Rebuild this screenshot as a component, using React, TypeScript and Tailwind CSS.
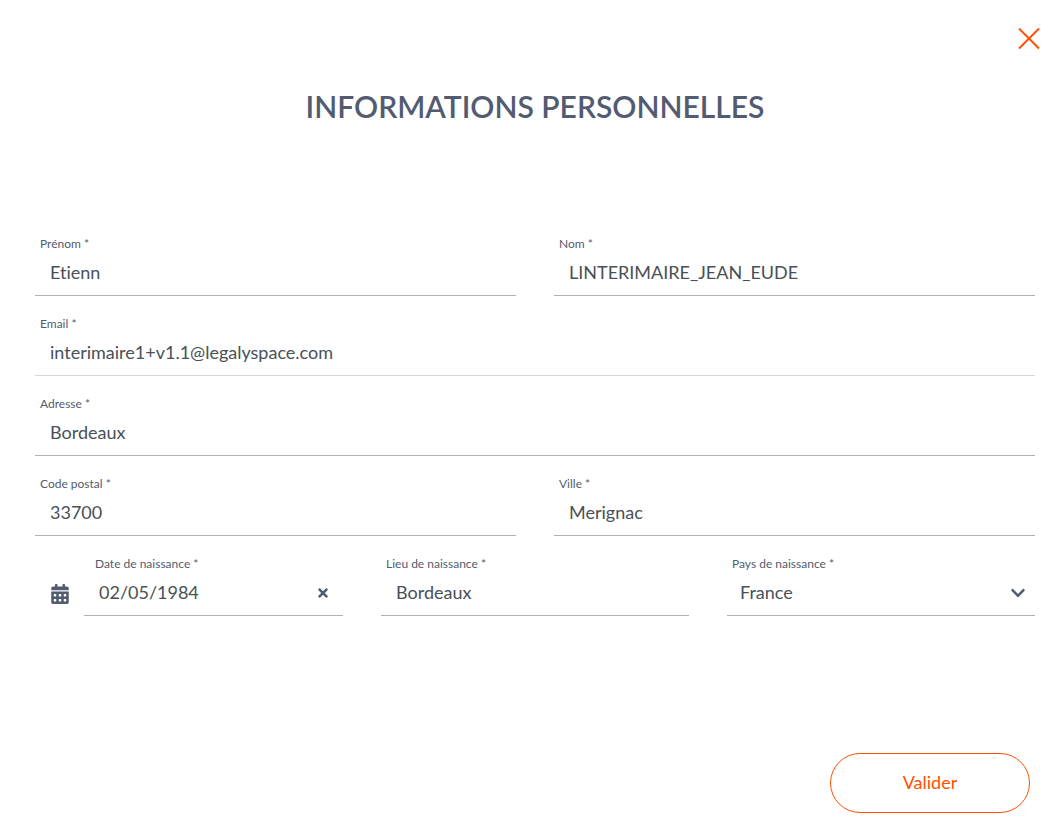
import React, { useState } from "react";
import { FaCalendarAlt, FaTimes, FaChevronDown } from "react-icons/fa";

type FieldProps = {
  id: string;
  label: string;
  value: string;
  type?: string;
  disabled?: boolean;
};

const labelClass = "block px-[5px] text-xs leading-4 text-[#525b6f]";
const inputClass =
  "block h-11 w-full border-b bg-transparent px-[15px] pb-1 text-lg text-[#495057] outline-none";

function Field({ id, label, value, type = "text", disabled = false }: FieldProps) {
  return (
    <div className="min-w-0 flex-1">
      <label htmlFor={id} className={labelClass}>
        {label} *
      </label>
      <input
        id={id}
        type={type}
        defaultValue={value}
        readOnly={disabled}
        className={`${inputClass} ${disabled ? "border-[#d4d5d7]" : "border-[#adb0b5]"}`}
      />
    </div>
  );
}

export default function App() {
  const [date, setDate] = useState("02/05/1984");
  return (
    <main className="min-h-screen bg-white font-['Lato',sans-serif] [font-variant-ligatures:none]">
      <div className="flex justify-end px-5 pt-7">
        <button type="button" aria-label="Fermer" className="text-[#ff4f00]">
          <svg viewBox="0 0 22 22" className="size-[22px]" fill="none" stroke="currentColor" strokeWidth="2">
            <path d="M1 0.5L21 20.5M21 0.5L1 20.5" />
          </svg>
        </button>
      </div>
      <h1 className="mt-9 pl-2.5 text-center text-[30px] leading-10 font-semibold text-[#525b6f] uppercase">
        Informations personnelles
      </h1>
      <form className="mt-[110px] pr-[25px] pl-[35px]" onSubmit={(e) => e.preventDefault()}>
        <div className="flex flex-col gap-5">
          <div className="flex gap-[38px]">
            <Field id="prenom" label="Prénom" value="Etienn" />
            <Field id="nom" label="Nom" value="LINTERIMAIRE_JEAN_EUDE" />
          </div>
          <Field id="email" label="Email" type="email" value="interimaire1+v1.1@legalyspace.com" disabled />
          <Field id="adresse" label="Adresse" value="Bordeaux" />
          <div className="flex gap-[38px]">
            <Field id="cp" label="Code postal" value="33700" />
            <Field id="ville" label="Ville" value="Merignac" />
          </div>
          <div className="flex gap-[38px]">
            <div className="flex min-w-0 flex-1">
              <div className="flex w-[49px] shrink-0 items-end justify-center pb-3 text-[#525b6f]">
                <FaCalendarAlt size={20} />
              </div>
              <div className="min-w-0 flex-1">
                <label htmlFor="date" className="block px-[11px] text-xs leading-4 text-[#525b6f]">
                  Date de naissance *
                </label>
                <div className="flex h-11 items-center border-b border-[#adb0b5] pr-[13px] pb-1 pl-[15px]">
                  <input
                    id="date"
                    value={date}
                    onChange={(e) => setDate(e.target.value)}
                    className="w-full min-w-0 text-lg text-[#495057] outline-none"
                  />
                  <button type="button" aria-label="Effacer la date" onClick={() => setDate("")} className="pt-0.5 text-[#525b6f]">
                    <FaTimes size={14} />
                  </button>
                </div>
              </div>
            </div>
            <Field id="lieu" label="Lieu de naissance" value="Bordeaux" />
            <div className="min-w-0 flex-1">
              <label htmlFor="pays" className={labelClass}>
                Pays de naissance *
              </label>
              <div className="grid">
                <select
                  id="pays"
                  defaultValue="France"
                  className="col-start-1 row-start-1 h-11 w-full appearance-none border-b border-[#adb0b5] bg-transparent px-[13px] pb-1 text-lg text-[#495057] outline-none"
                >
                  <option>France</option>
                </select>
                <FaChevronDown
                  size={16}
                  className="pointer-events-none col-start-1 row-start-1 mr-[9px] mb-0.5 self-center justify-self-end text-[#525b6f]"
                />
              </div>
            </div>
          </div>
        </div>
        <div className="mt-[137px] flex justify-end pr-[5px] pb-[27px]">
          <button type="submit" className="h-[60px] w-[200px] rounded-full border border-[#ff4f00] pb-0.5 text-lg text-[#ff4f00]">
            Valider
          </button>
        </div>
      </form>
    </main>
  );
}
